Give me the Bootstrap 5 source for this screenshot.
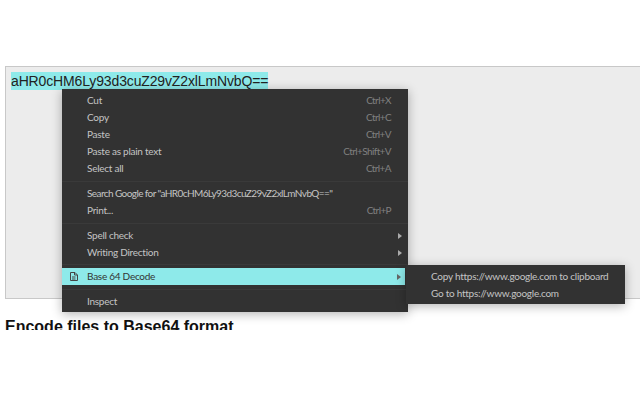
<!DOCTYPE html>
<html lang="en"><head><meta charset="utf-8"><title>Base64</title>
<link rel="stylesheet" href="https://cdn.jsdelivr.net/npm/bootstrap@5.3.0/dist/css/bootstrap.min.css">
<style>
html,body{height:400px;overflow:hidden;background:#fff}
.stage{height:330px;overflow:hidden;padding:66px 0 0 5px;font-family:"Liberation Sans",Arial,sans-serif;position:relative}
.inputbox{height:233px;background:#ececec;border:1px solid #c8c8c8;border-right:0;padding:5px 5px;margin-right:-2px;font-size:14px;line-height:18px;color:#222;letter-spacing:-.14px}
.sel{background:#8eeaea;display:inline-block;height:18px}
.title{font-size:16px;font-weight:700;line-height:20px;margin:18px 0 0;color:#111;font-family:"Liberation Sans",Arial,sans-serif}
.ctx{position:absolute;background:#323232;box-shadow:0 2px 10px rgba(0,0,0,.3);font-family:Lato,sans-serif;font-size:10px;color:#c4c4c4;white-space:nowrap;letter-spacing:-.26px}
.ctx-main{left:62px;top:89px;width:346px;padding-top:3px;height:223px}
.ctx-sub{left:406px;top:265px;width:219px;height:39px;padding-top:3px}
.it{height:17px;line-height:17px;padding:0 17px 0 25px;display:flex;justify-content:space-between;align-items:center;position:relative}
.key{color:#808080;letter-spacing:-.6px}
.query{letter-spacing:-.58px}
.sep{height:1px;margin:4px 0 3px;background:#3a3a3a}
.sep.tight{margin:3px 0}
.active{background:#8eeaea;color:#333;margin-right:3px;padding-right:14px}
.arr{width:0;height:0;border-left:4px solid #aaa;border-top:3px solid transparent;border-bottom:3px solid transparent;margin-right:-11px}
.active .arr{border-left-color:#666;margin-right:-10px}
.ico{position:absolute;left:8px;top:4px}
</style></head><body>
<div class="stage">
<div class="inputbox"><span class="sel">aHR0cHM6Ly93d3cuZ29vZ2xlLmNvbQ==</span></div>
<h2 class="title">Encode files to Base64 format</h2>
<div class="ctx ctx-main">
<div class="it"><span>Cut</span><span class="key">Ctrl+X</span></div>
<div class="it"><span>Copy</span><span class="key">Ctrl+C</span></div>
<div class="it"><span>Paste</span><span class="key">Ctrl+V</span></div>
<div class="it"><span>Paste as plain text</span><span class="key">Ctrl+Shift+V</span></div>
<div class="it"><span>Select all</span><span class="key">Ctrl+A</span></div>
<div class="sep"></div>
<div class="it"><span class="query">Search Google for "aHR0cHM6Ly93d3cuZ29vZ2xlLmNvbQ=="</span></div>
<div class="it"><span>Print...</span><span class="key">Ctrl+P</span></div>
<div class="sep"></div>
<div class="it"><span>Spell check</span><span class="arr"></span></div>
<div class="it"><span>Writing Direction</span><span class="arr"></span></div>
<div class="sep tight"></div>
<div class="it active"><svg class="ico" width="8" height="9" viewBox="0 0 8 9" fill="none" stroke="#444" stroke-width="1"><path d="M.5.5h4.500l2.500 2.500v5.500h-7z"/><path d="M2 5h3.500M2 7h3.500M4.500.5v2.500h2.500"/></svg><span>Base 64 Decode</span><span class="arr"></span></div>
<div class="sep"></div>
<div class="it"><span>Inspect</span></div>
</div>
<div class="ctx ctx-sub">
<div class="it"><span>Copy https://www.google.com to clipboard</span></div>
<div class="it"><span>Go to https://www.google.com</span></div>
</div>
</div>
</body></html>
